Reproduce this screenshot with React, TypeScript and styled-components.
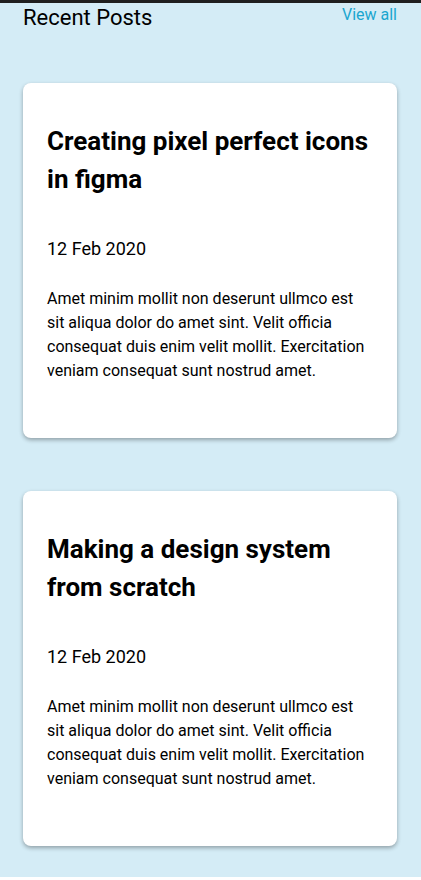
import React from "react";
import styled, { createGlobalStyle } from "styled-components";

const Global = createGlobalStyle`
  html, body { margin: 0; padding: 0; background: #ffffff; }
  body { font-family: Roboto, "Liberation Sans", sans-serif; }
`;

const Page = styled.div`
  background: #d4ecf6;
  border-top: 3px solid #1f1f1f;
  padding: 2px 24px 31px 23px;
  display: flex;
  flex-direction: column;
`;

const Header = styled.header`
  display: flex;
  justify-content: space-between;
  align-items: flex-start;
  margin-bottom: 52px;
`;

const Heading = styled.h2`
  margin: 0;
  font-size: 22px;
  font-weight: 400;
  line-height: 26px;
  color: #000;
`;

const ViewAll = styled.a`
  font-size: 16px;
  line-height: 19px;
  color: #1aa6cf;
  text-decoration: none;
`;

const List = styled.div`
  display: flex;
  flex-direction: column;
  gap: 53px;
`;

const Card = styled.article`
  background: #fff;
  border-radius: 8px;
  box-shadow: 0 2px 4px rgba(0, 0, 0, 0.32);
  padding: 39px 24px 55px;
`;

const Title = styled.h3`
  margin: 0 0 40px;
  font-size: 26px;
  font-weight: 700;
  line-height: 38px;
  color: #000;
`;

const DateText = styled.div`
  font-size: 18px;
  line-height: 21px;
  color: #000;
  margin-bottom: 28px;
`;

const Body = styled.p`
  margin: 0;
  font-size: 16px;
  line-height: 24px;
  color: #000;
`;

const posts = [
  { title: "Creating pixel perfect icons in figma", date: "12 Feb 2020" },
  { title: "Making a design system from scratch", date: "12 Feb 2020" },
];

const text =
  "Amet minim mollit non deserunt ullmco est sit aliqua dolor do amet sint. Velit officia consequat duis enim velit mollit. Exercitation veniam consequat sunt nostrud amet.";

export default function App() {
  return (
    <>
      <Global />
      <Page>
        <Header>
          <Heading>Recent Posts</Heading>
          <ViewAll href="#">View all</ViewAll>
        </Header>
        <List>
          {posts.map((p) => (
            <Card key={p.title}>
              <Title>{p.title}</Title>
              <DateText>{p.date}</DateText>
              <Body>{text}</Body>
            </Card>
          ))}
        </List>
      </Page>
    </>
  );
}
